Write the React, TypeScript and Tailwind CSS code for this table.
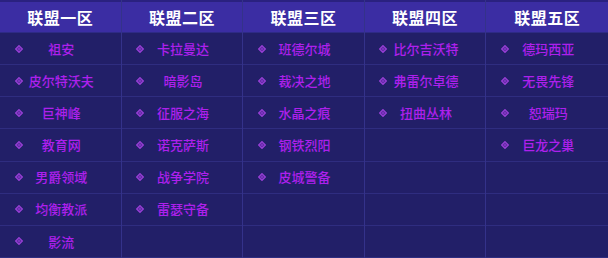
import React from "react";

const cols: { title: string; items: string[] }[] = [
  { title: "联盟一区", items: ["祖安", "皮尔特沃夫", "巨神峰", "教育网", "男爵领域", "均衡教派", "影流"] },
  { title: "联盟二区", items: ["卡拉曼达", "暗影岛", "征服之海", "诺克萨斯", "战争学院", "雷瑟守备"] },
  { title: "联盟三区", items: ["班德尔城", "裁决之地", "水晶之痕", "钢铁烈阳", "皮城警备"] },
  { title: "联盟四区", items: ["比尔吉沃特", "弗雷尔卓德", "扭曲丛林"] },
  { title: "联盟五区", items: ["德玛西亚", "无畏先锋", "恕瑞玛", "巨龙之巢"] },
];

function Diamond() {
  return (
    <svg width="8" height="8" viewBox="0 0 8 8" className="absolute left-[14.5px] top-1/2 -translate-y-1/2">
      <polygon points="4,0.6 7.4,4 4,7.4 0.6,4" fill="#5e2a9e" stroke="#9a40d8" strokeWidth="1.2" />
      <polygon points="4,2.6 5.4,4 4,5.4 2.6,4" fill="#8236c8" />
    </svg>
  );
}

export default function App() {
  return (
    <div
      className="w-[608px] h-[258px] bg-[#221f68] overflow-hidden grid grid-cols-5"
      style={{ fontFamily: '"Noto Sans CJK SC", "Noto Sans", sans-serif' }}
    >
      {cols.map((c, ci) => (
        <div key={ci} className={`flex flex-col ${ci < 4 ? "border-r border-[#34328a]" : ""}`}>
          <div className="h-[33px] shrink-0 bg-[#3b2da3] border-t-2 border-[#2a2180] border-b border-b-[#2e2a86] flex items-center justify-center text-white font-bold text-[16px] tracking-[0.5px]">
            {c.title}
          </div>
          {Array.from({ length: 7 }).map((_, ri) => (
            <div
              key={ri}
              className="relative h-[32.14px] shrink-0 border-b border-[#2f2d80] flex items-center justify-center text-[13px] font-medium text-[#ad20ec]"
            >
              {c.items[ri] ? (
                <>
                  <Diamond />
                  <span className="pl-[2px]">{c.items[ri]}</span>
                </>
              ) : null}
            </div>
          ))}
        </div>
      ))}
    </div>
  );
}
